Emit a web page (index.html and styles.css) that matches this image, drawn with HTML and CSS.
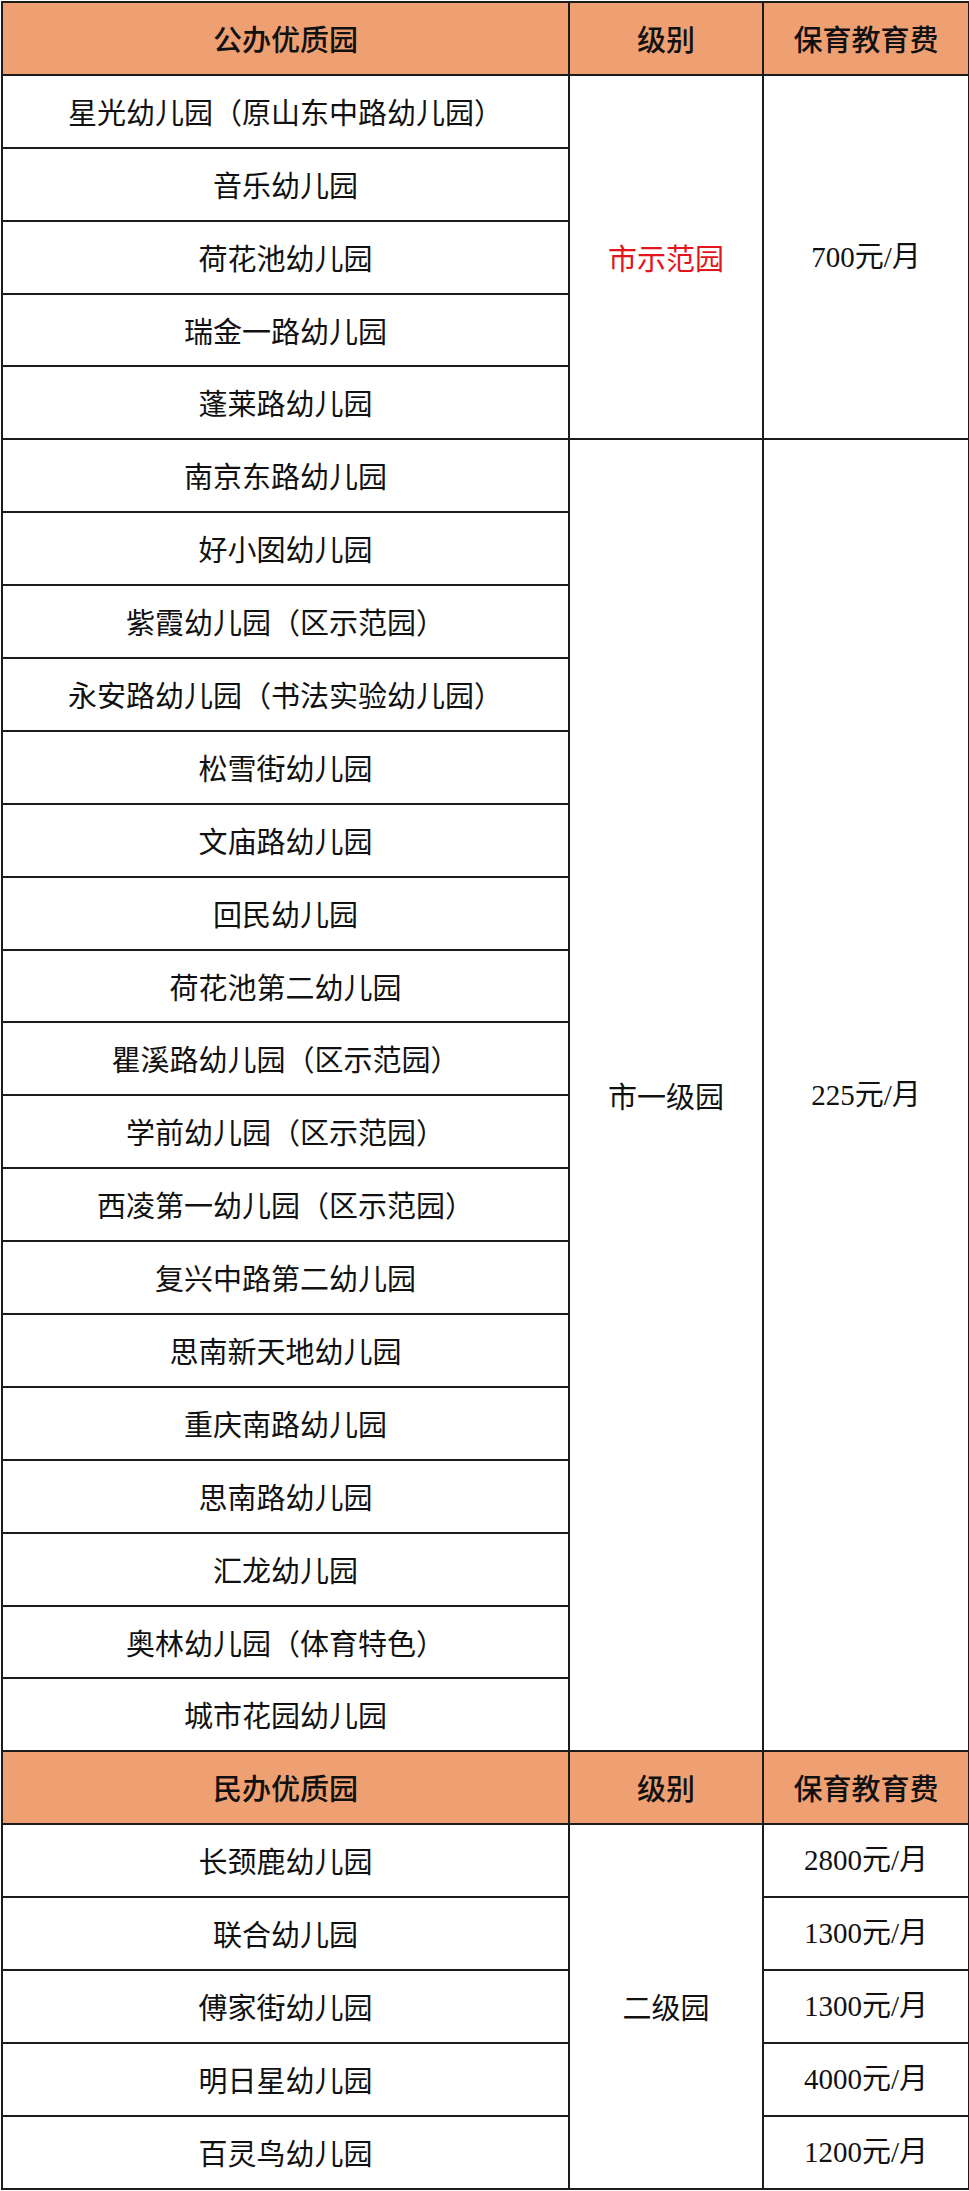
FILE: index.html
```html
<!DOCTYPE html>
<html lang="zh-CN">
<head>
<meta charset="utf-8">
<title>优质园收费</title>
<link rel="stylesheet" href="styles.css">
</head>
<body>
<table class="fees">
  <colgroup>
    <col class="c-name">
    <col class="c-level">
    <col class="c-fee">
  </colgroup>
  <tbody>
    <tr class="head"><td>公办优质园</td><td>级别</td><td>保育教育费</td></tr>
    <tr><td>星光幼儿园（原山东中路幼儿园）</td><td rowspan="5" class="red">市示范园</td><td rowspan="5" class="fee">700元/月</td></tr>
    <tr><td>音乐幼儿园</td></tr>
    <tr><td>荷花池幼儿园</td></tr>
    <tr><td>瑞金一路幼儿园</td></tr>
    <tr><td>蓬莱路幼儿园</td></tr>
    <tr><td>南京东路幼儿园</td><td rowspan="18">市一级园</td><td rowspan="18" class="fee">225元/月</td></tr>
    <tr><td>好小囡幼儿园</td></tr>
    <tr><td>紫霞幼儿园（区示范园）</td></tr>
    <tr><td>永安路幼儿园（书法实验幼儿园）</td></tr>
    <tr><td>松雪街幼儿园</td></tr>
    <tr><td>文庙路幼儿园</td></tr>
    <tr><td>回民幼儿园</td></tr>
    <tr><td>荷花池第二幼儿园</td></tr>
    <tr><td>瞿溪路幼儿园（区示范园）</td></tr>
    <tr><td>学前幼儿园（区示范园）</td></tr>
    <tr><td>西凌第一幼儿园（区示范园）</td></tr>
    <tr><td>复兴中路第二幼儿园</td></tr>
    <tr><td>思南新天地幼儿园</td></tr>
    <tr><td>重庆南路幼儿园</td></tr>
    <tr><td>思南路幼儿园</td></tr>
    <tr><td>汇龙幼儿园</td></tr>
    <tr><td>奥林幼儿园（体育特色）</td></tr>
    <tr><td>城市花园幼儿园</td></tr>
    <tr class="head"><td>民办优质园</td><td>级别</td><td>保育教育费</td></tr>
    <tr><td>长颈鹿幼儿园</td><td rowspan="5">二级园</td><td class="fee">2800元/月</td></tr>
    <tr><td>联合幼儿园</td><td class="fee">1300元/月</td></tr>
    <tr><td>傅家街幼儿园</td><td class="fee">1300元/月</td></tr>
    <tr><td>明日星幼儿园</td><td class="fee">4000元/月</td></tr>
    <tr><td>百灵鸟幼儿园</td><td class="fee">1200元/月</td></tr>
  </tbody>
</table>
</body>
</html>
```

FILE: styles.css
```css
html, body {
  margin: 0;
  padding: 0;
  background: #ffffff;
}

body {
  padding: 1px 0 0 1px;
}

.fees {
  border-collapse: collapse;
  table-layout: fixed;
  width: 967px;
  font-family: "Noto Sans CJK SC", sans-serif;
  font-size: 29px;
  color: #111111;
}

.c-name { width: 567px; }
.c-level { width: 194px; }
.c-fee { width: 206px; }

.fees tr {
  height: 72.9px;
}

.fees td {
  border: 2px solid #1c1c1c;
  padding: 0;
  text-align: center;
  vertical-align: middle;
  line-height: 1;
  white-space: nowrap;
}

.fees .head td {
  background: #efa072;
  font-weight: 500;
  color: #111111;
}

.fees .red {
  color: #e3141b;
}

.fees .fee {
  font-family: "Liberation Serif", "Noto Sans CJK SC", serif;
  font-size: 29px;
}
```
